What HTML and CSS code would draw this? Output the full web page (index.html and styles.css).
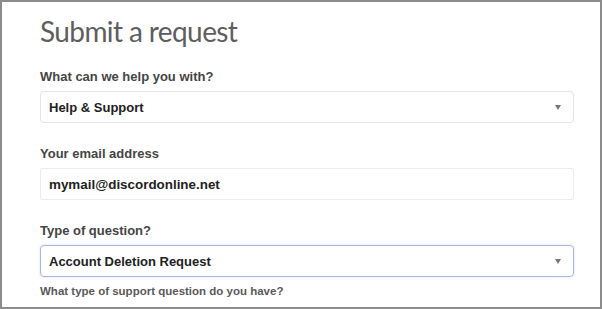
FILE: index.html
```html
<!doctype html>
<html>
<head>
    <meta charset="utf-8">
    <title>Submit a request</title>
    <link rel="stylesheet" href="styles.css">
</head>
<body>
    <div class="frame">
        <h1 class="title">Submit a request</h1>
        <div class="field">
            <label class="label">What can we help you with?</label>
            <div class="select">
                <span class="value">Help &amp; Support</span>
                <span class="arrow"></span>
            </div>
        </div>
        <div class="field">
            <label class="label">Your email address</label>
            <div class="input">
                <span class="value email">mymail@discordonline.net</span>
            </div>
        </div>
        <div class="field">
            <label class="label">Type of question?</label>
            <div class="select focused">
                <span class="value">Account Deletion Request</span>
                <span class="arrow"></span>
            </div>
            <p class="hint">What type of support question do you have?</p>
        </div>
    </div>
</body>
</html>
```

FILE: styles.css
```css
body {
    margin: 0;
    padding: 0;
    background-color: #fff;
    font-family: "Liberation Sans", Arial, sans-serif;
}
.frame {
    width: 602px;
    height: 309px;
    box-sizing: border-box;
    border: 2px solid #8c8c8c;
    padding: 11px 26px 0 38px;
    background-color: #fff;
    overflow: hidden;
}
.title {
    font-family: Lato, "Open Sans", sans-serif;
    font-weight: 400;
    font-size: 28px;
    line-height: 36px;
    letter-spacing: -0.6px;
    color: #5e5e5e;
    margin: 0 0 20px 0;
}
.field {
    margin-bottom: 23px;
}
.label {
    display: block;
    font-size: 13px;
    line-height: 16px;
    font-weight: bold;
    color: #454545;
    margin-bottom: 6px;
}
.select,
.input {
    height: 32px;
    box-sizing: border-box;
    border: 1px solid #e4e4e4;
    border-radius: 4px;
    display: flex;
    align-items: center;
    justify-content: space-between;
    padding: 0 12px 0 8px;
}
.input {
    border-color: #ececec;
    border-radius: 2px;
}
.select.focused {
    border-color: #a9b5e4;
    box-shadow: 0 0 2px rgba(120, 140, 220, 0.35);
}
.value {
    font-size: 13px;
    font-weight: bold;
    color: #222;
}
.email {
    font-size: 13.4px;
}
.arrow {
    width: 0;
    height: 0;
    border-left: 3px solid transparent;
    border-right: 3px solid transparent;
    border-top: 5px solid #777;
}
.hint {
    font-size: 11.5px;
    line-height: 14px;
    font-weight: bold;
    color: #5a5a5a;
    margin: 7px 0 0 0;
}
```
